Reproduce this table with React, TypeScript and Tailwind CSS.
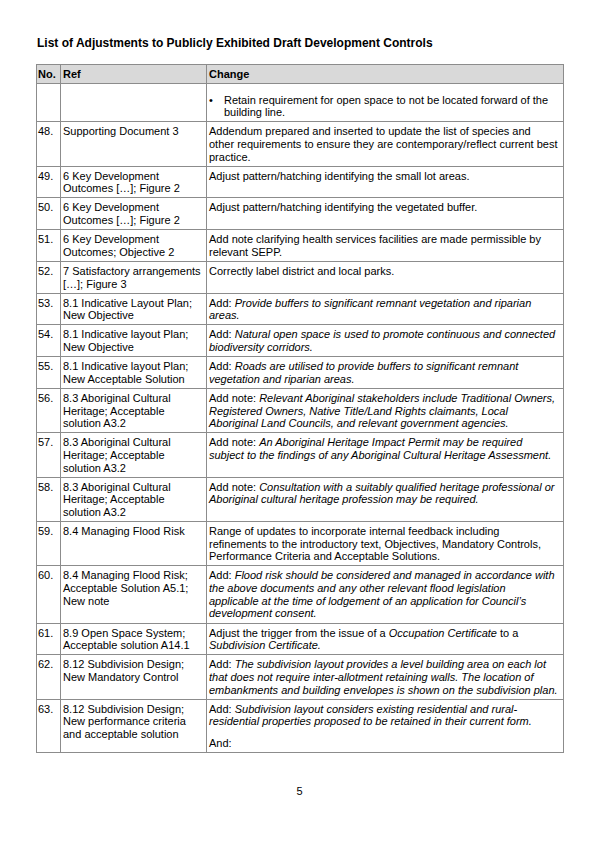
import type { ReactNode } from 'react';

interface Row {
  no: string;
  ref: ReactNode;
  change: ReactNode;
}

const aboriginalRef = (
  <>
    8.3 Aboriginal Cultural
    <br />
    Heritage; Acceptable
    <br />
    solution A3.2
  </>
);

const rows: Row[] = [
  {
    no: '48.',
    ref: 'Supporting Document 3',
    change: (
      <>
        Addendum prepared and inserted to update the list of species and
        <br />
        other requirements to ensure they are contemporary/reflect current best
        <br />
        practice.
      </>
    )
  },
  {
    no: '49.',
    ref: (
      <>
        6 Key Development
        <br />
        Outcomes […]; Figure 2
      </>
    ),
    change: 'Adjust pattern/hatching identifying the small lot areas.'
  },
  {
    no: '50.',
    ref: (
      <>
        6 Key Development
        <br />
        Outcomes […]; Figure 2
      </>
    ),
    change: 'Adjust pattern/hatching identifying the vegetated buffer.'
  },
  {
    no: '51.',
    ref: (
      <>
        6 Key Development
        <br />
        Outcomes; Objective 2
      </>
    ),
    change: (
      <>
        Add note clarifying health services facilities are made permissible by
        <br />
        relevant SEPP.
      </>
    )
  },
  {
    no: '52.',
    ref: (
      <>
        7 Satisfactory arrangements
        <br />
        […]; Figure 3
      </>
    ),
    change: 'Correctly label district and local parks.'
  },
  {
    no: '53.',
    ref: (
      <>
        8.1 Indicative Layout Plan;
        <br />
        New Objective
      </>
    ),
    change: (
      <>
        Add:{' '}
        <i>
          Provide buffers to significant remnant vegetation and riparian
          <br />
          areas.
        </i>
      </>
    )
  },
  {
    no: '54.',
    ref: (
      <>
        8.1 Indicative layout Plan;
        <br />
        New Objective
      </>
    ),
    change: (
      <>
        Add:{' '}
        <i>
          Natural open space is used to promote continuous and connected
          <br />
          biodiversity corridors.
        </i>
      </>
    )
  },
  {
    no: '55.',
    ref: (
      <>
        8.1 Indicative layout Plan;
        <br />
        New Acceptable Solution
      </>
    ),
    change: (
      <>
        Add:{' '}
        <i>
          Roads are utilised to provide buffers to significant remnant
          <br />
          vegetation and riparian areas.
        </i>
      </>
    )
  },
  {
    no: '56.',
    ref: aboriginalRef,
    change: (
      <>
        Add note:{' '}
        <i>
          Relevant Aboriginal stakeholders include Traditional Owners,
          <br />
          Registered Owners, Native Title/Land Rights claimants, Local
          <br />
          Aboriginal Land Councils, and relevant government agencies.
        </i>
      </>
    )
  },
  {
    no: '57.',
    ref: aboriginalRef,
    change: (
      <>
        Add note:{' '}
        <i>
          An Aboriginal Heritage Impact Permit may be required
          <br />
          subject to the findings of any Aboriginal Cultural Heritage Assessment.
        </i>
      </>
    )
  },
  {
    no: '58.',
    ref: aboriginalRef,
    change: (
      <>
        Add note:{' '}
        <i>
          Consultation with a suitably qualified heritage professional or
          <br />
          Aboriginal cultural heritage profession may be required.
        </i>
      </>
    )
  },
  {
    no: '59.',
    ref: '8.4 Managing Flood Risk',
    change: (
      <>
        Range of updates to incorporate internal feedback including
        <br />
        refinements to the introductory text, Objectives, Mandatory Controls,
        <br />
        Performance Criteria and Acceptable Solutions.
      </>
    )
  },
  {
    no: '60.',
    ref: (
      <>
        8.4 Managing Flood Risk;
        <br />
        Acceptable Solution A5.1;
        <br />
        New note
      </>
    ),
    change: (
      <>
        Add:{' '}
        <i>
          Flood risk should be considered and managed in accordance with
          <br />
          the above documents and any other relevant flood legislation
          <br />
          applicable at the time of lodgement of an application for Council’s
          <br />
          development consent.
        </i>
      </>
    )
  },
  {
    no: '61.',
    ref: (
      <>
        8.9 Open Space System;
        <br />
        Acceptable solution A14.1
      </>
    ),
    change: (
      <>
        Adjust the trigger from the issue of a <i>Occupation Certificate</i> to a
        <br />
        <i>Subdivision Certificate.</i>
      </>
    )
  },
  {
    no: '62.',
    ref: (
      <>
        8.12 Subdivision Design;
        <br />
        New Mandatory Control
      </>
    ),
    change: (
      <>
        Add:{' '}
        <i>
          The subdivision layout provides a level building area on each lot
          <br />
          that does not require inter-allotment retaining walls. The location of
          <br />
          embankments and building envelopes is shown on the subdivision plan.
        </i>
      </>
    )
  },
  {
    no: '63.',
    ref: (
      <>
        8.12 Subdivision Design;
        <br />
        New performance criteria
        <br />
        and acceptable solution
      </>
    ),
    change: (
      <>
        <p>
          Add:{' '}
          <i>
            Subdivision layout considers existing residential and rural-
            <br />
            residential properties proposed to be retained in their current form.
          </i>
        </p>
        <p className="mt-[9px]">And:</p>
      </>
    )
  }
];

const cell = 'border border-[#8c8c8c] align-top pt-[3px] pb-[2.4px] whitespace-nowrap';

export default function App() {
  return (
    <div className="w-[599px] min-h-[848px] bg-white text-black font-['Liberation_Sans',Arial,sans-serif]">
      <div className="pl-[36px] pt-[36px]">
        {/* Heading */}
        <h1 className="text-[12px] leading-[14px] font-bold pl-[1px] mb-[14px]">
          List of Adjustments to Publicly Exhibited Draft Development Controls
        </h1>

        {/* Adjustments table */}
        <table className="w-[527px] table-fixed border-collapse text-[11px] leading-[12.67px]">
          <colgroup>
            <col className="w-[24px]" />
            <col className="w-[146px]" />
            <col className="w-[357px]" />
          </colgroup>
          <thead>
            <tr className="bg-[#d9d9d9]">
              <th className={`${cell} text-left font-bold pl-[1px]`}>No.</th>
              <th className={`${cell} text-left font-bold pl-[2px]`}>Ref</th>
              <th className={`${cell} text-left font-bold pl-[2px]`}>Change</th>
            </tr>
          </thead>
          <tbody>
            <tr>
              <td className={`${cell} pl-[1px]`} />
              <td className={`${cell} pl-[2px]`} />
              <td className={`${cell} pl-[2px] pt-[9.5px]`}>
                <div className="flex">
                  <span className="w-[15px] shrink-0">•</span>
                  <span>
                    Retain requirement for open space to not be located forward of the
                    <br />
                    building line.
                  </span>
                </div>
              </td>
            </tr>
            {rows.map((row) => (
              <tr key={row.no}>
                <td className={`${cell} pl-[1px]`}>{row.no}</td>
                <td className={`${cell} pl-[2px]`}>{row.ref}</td>
                <td className={`${cell} pl-[2px]`}>{row.change}</td>
              </tr>
            ))}
          </tbody>
        </table>
      </div>

      {/* Page number */}
      <p className="mt-[32px] text-center text-[11px] leading-[12.67px]">5</p>
    </div>
  );
}
